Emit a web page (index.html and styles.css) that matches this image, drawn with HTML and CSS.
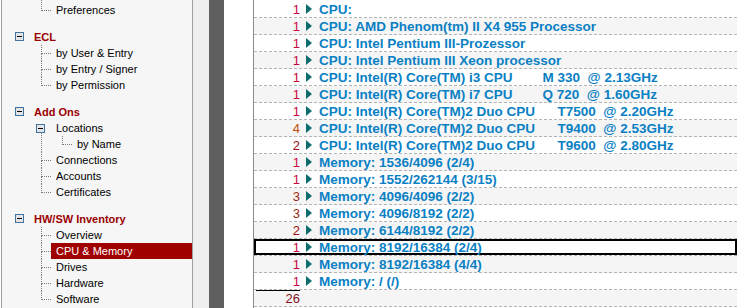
FILE: index.html
```html
<!DOCTYPE html>
<html lang="en">
<head>
  <meta charset="UTF-8">
  <title>HW/SW Inventory - CPU &amp; Memory</title>
  <link rel="stylesheet" href="styles.css">
</head>
<body>
  <div class="sidebar">
    <ul class="branch tail">
      <li>Preferences</li>
    </ul>

    <div class="group">
      <div class="group-head"><span class="toggle"></span>ECL</div>
      <ul class="branch">
        <li>by User &amp; Entry</li>
        <li>by Entry / Signer</li>
        <li>by Permission</li>
      </ul>
    </div>

    <div class="group">
      <div class="group-head"><span class="toggle"></span>Add Ons</div>
      <ul class="branch">
        <li class="open"><span class="toggle"></span>Locations
          <ul class="branch">
            <li>by Name</li>
          </ul>
        </li>
        <li>Connections</li>
        <li>Accounts</li>
        <li>Certificates</li>
      </ul>
    </div>

    <div class="group">
      <div class="group-head"><span class="toggle"></span>HW/SW Inventory</div>
      <ul class="branch">
        <li>Overview</li>
        <li><span class="sel">CPU &amp; Memory</span></li>
        <li>Drives</li>
        <li>Hardware</li>
        <li>Software</li>
      </ul>
    </div>
  </div>

  <div class="strip-light"></div>
  <div class="strip-dark"></div>
  <div class="spacer"></div>

  <div class="content" id="list"></div>

  <script>
    // inventory counts, grouped by cpu / memory string
    var rows = [
      [1, 'CPU:'],
      [1, 'CPU: AMD Phenom(tm) II X4 955 Processor'],
      [1, 'CPU: Intel Pentium III-Prozessor'],
      [1, 'CPU: Intel Pentium III Xeon processor'],
      [1, 'CPU: Intel(R) Core(TM) i3 CPU        M 330  @ 2.13GHz'],
      [1, 'CPU: Intel(R) Core(TM) i7 CPU        Q 720  @ 1.60GHz'],
      [1, 'CPU: Intel(R) Core(TM)2 Duo CPU      T7500  @ 2.20GHz'],
      [4, 'CPU: Intel(R) Core(TM)2 Duo CPU      T9400  @ 2.53GHz'],
      [2, 'CPU: Intel(R) Core(TM)2 Duo CPU      T9600  @ 2.80GHz'],
      [1, 'Memory: 1536/4096 (2/4)'],
      [1, 'Memory: 1552/262144 (3/15)'],
      [3, 'Memory: 4096/4096 (2/2)'],
      [3, 'Memory: 4096/8192 (2/2)'],
      [2, 'Memory: 6144/8192 (2/2)'],
      [1, 'Memory: 8192/16384 (2/4)'],
      [1, 'Memory: 8192/16384 (4/4)'],
      [1, 'Memory: / (/)']
    ];
    var focused = 14;

    var list = document.getElementById('list');
    var total = 0;
    var arrow = '<svg class="arrow" width="6" height="10" viewBox="0 0 6 10">' +
      '<polygon points="0,0 6,5 0,10" fill="#0d6d6d"/></svg>';

    rows.forEach(function (r, i) {
      total += r[0];
      var row = document.createElement('div');
      row.className = 'row' + (i === focused ? ' focus' : '');
      row.innerHTML = '<span class="count c' + r[0] + '">' + r[0] + '</span>' +
        arrow + '<span class="label"></span>';
      row.querySelector('.label').textContent = r[1];
      list.appendChild(row);
    });

    var sum = document.createElement('div');
    sum.className = 'row total';
    sum.innerHTML = '<span class="count">' + total + '</span>';
    list.appendChild(sum);
  </script>
</body>
</html>
```

FILE: styles.css
```css
body {
  margin: 0;
  display: flex;
  height: 308px;
  overflow: hidden;
  background: #fff;
  font-family: "Liberation Sans", Arial, sans-serif;
}

/* navigation tree */
.sidebar {
  flex: none;
  width: 190px;
  margin-left: 1px;
  padding-top: 2px;
  border-left: 1px solid #a0a0a0;
  border-right: 1px solid #a0a0a0;
  background: #f6f6f6;
  font-size: 11px;
  color: #000;
}
.group {
  margin-top: 10px;
}
.group-head {
  display: flex;
  align-items: center;
  height: 17px;
  padding-left: 13px;
  font-weight: bold;
  color: #9b0000;
}
.toggle {
  display: flex;
  align-items: center;
  justify-content: center;
  width: 7px;
  height: 7px;
  margin-right: 10px;
  border: 1px solid #3f74a3;
  background: #e4e4e4;
}
.toggle::before {
  content: '';
  width: 5px;
  height: 1px;
  background: #000;
}
ul.branch {
  list-style: none;
  margin: 0 0 0 39px;
  padding: 0;
}
.branch .branch {
  margin-left: 6px;
}
.branch li {
  position: relative;
  padding-left: 15px;
  line-height: 16px;
}
.branch li::before {
  content: '';
  position: absolute;
  left: 0;
  top: 0;
  width: 9px;
  height: 8px;
  border-left: 1px dotted #7a7a7a;
  border-bottom: 1px dotted #7a7a7a;
}
.branch li:not(:last-child)::after {
  content: '';
  position: absolute;
  left: 0;
  top: 8px;
  bottom: 0;
  border-left: 1px dotted #7a7a7a;
}
.tail li::before {
  top: -2px;
  height: 10px;
}
.branch li.open::before {
  display: none;
}
.branch li.open > .toggle {
  position: absolute;
  left: -5px;
  top: 4px;
  z-index: 1;
}
.sel {
  display: block;
  margin-left: -5px;
  padding-left: 5px;
  background: #a00000;
  color: #fff;
}

/* splitter */
.strip-light {
  flex: none;
  width: 16px;
  background: #efefef;
}
.strip-dark {
  flex: none;
  width: 15px;
  background: #5f5f5f;
}
.spacer {
  flex: none;
  width: 29px;
}

/* result list */
.content {
  flex: 1;
  padding-top: 1px;
  border-left: 1px solid #8a8a8a;
}
.row {
  display: flex;
  align-items: center;
  height: 16px;
  border-bottom: 1px dashed #b4b4b4;
}
.row:nth-child(even) {
  background: #f5f5f5;
}
.row.focus {
  box-shadow: inset 0 0 0 2px #000;
}
.count {
  flex: none;
  width: 46px;
  text-align: right;
  font-size: 13px;
}
.c1 { color: #c8063e; }
.c2 { color: #a30f14; }
.c3 { color: #9a2a12; }
.c4 { color: #c0500c; }
.arrow {
  flex: none;
  margin-left: 6px;
}
.label {
  margin-left: 7px;
  white-space: pre;
  font-size: 13.5px;
  font-weight: bold;
  color: #0a80c4;
}
.total .count {
  align-self: stretch;
  width: 44px;
  margin-left: 2px;
  border-top: 1px solid #000;
  line-height: 15px;
  color: #80101c;
}
```
